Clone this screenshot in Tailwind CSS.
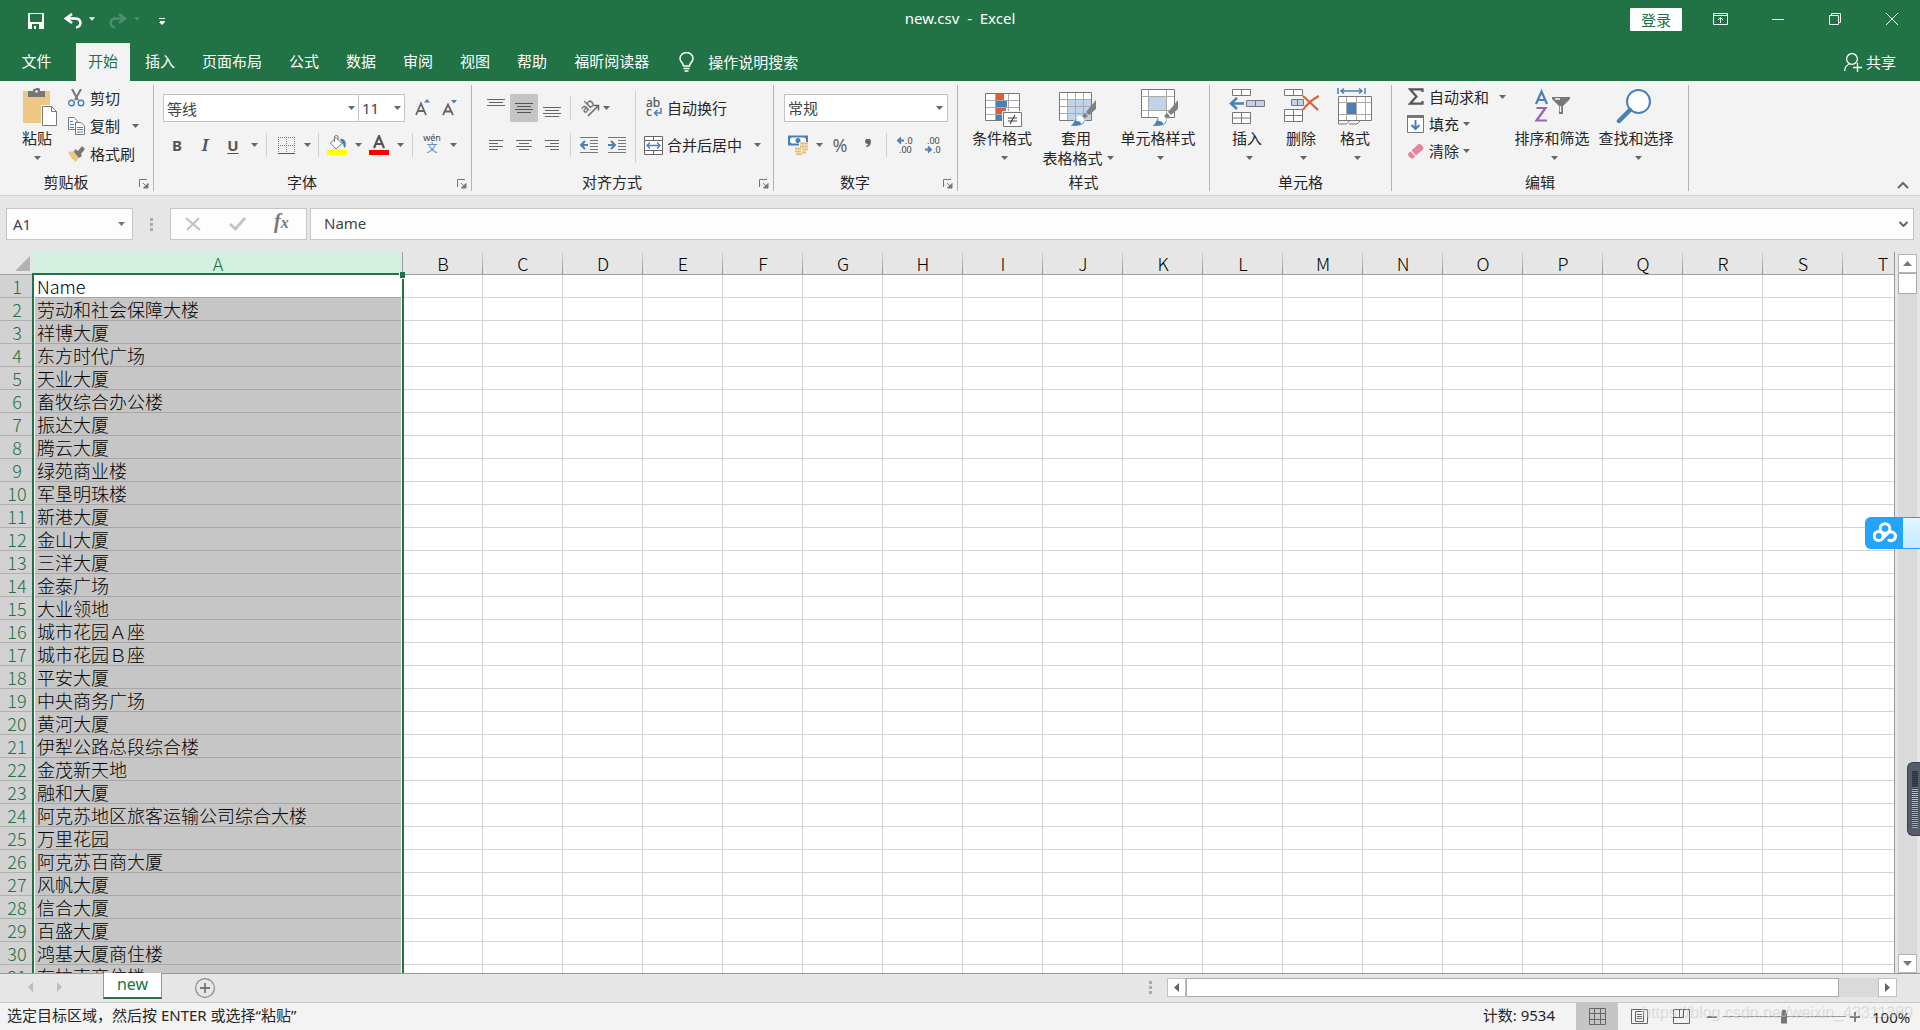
<!DOCTYPE html>
<html lang="zh-CN">
<head>
<meta charset="utf-8">
<title>new.csv - Excel</title>
<script src="https://cdn.jsdelivr.net/npm/@tailwindcss/browser@4"></script>
</head>
<body class="flex h-screen flex-col overflow-hidden bg-[#e6e6e6] font-['Noto_Sans','Noto_Sans_CJK_SC',sans-serif] text-[15px] leading-5 text-[#262626]">

<svg class="hidden">
  <symbol id="arrow" viewBox="0 0 7 4"><path d="M0 0h7L3.5 4z" fill="currentColor"/></symbol>
  <symbol id="launcher" viewBox="0 0 10 10"><path d="M.5 8V.5H8" fill="none" stroke="#777"/><path d="M4 4l4 4M9 4.500V9H4.500z" fill="#777" stroke="#777"/></symbol>
  <symbol id="brush" viewBox="0 0 28 27"><path d="M27 0v9l-7 6-3-3z" fill="#808080"/><path d="M16 13l3 3-4 3-2-3z" fill="#808080"/><path d="M0 26c5-1 4-6 8-9 3-2 8 0 8 4-1 5-8 6-16 5z" fill="#4a80b8" stroke="#fff" stroke-width=".8"/><path d="M8 17c2-2 7-1 7 3 0 2-2 4-3 4 0-3-3-3-5-3z" fill="#fff"/></symbol>
</svg>

<!-- Title bar -->
<header class="flex-none bg-[#217346] text-white">
  <div class="grid h-[43px] grid-cols-[1fr_auto_1fr] items-start">
    <div class="flex h-[43px] items-center pb-[1px] pl-7">
      <button aria-label="保存"><svg class="h-4 w-4" viewBox="0 0 16 16"><path d="M0 0h16v16H0zM2 1v8h12V1zM4 11v5h2v-3h2v3h3v-5z" fill="#fff" fill-rule="evenodd"/></svg></button>
      <button aria-label="撤消" class="ml-5"><svg class="h-4 w-[18px]" viewBox="0 0 18 16"><path d="M8 1L2 5.500l6 4.500M2 5.500h9c7 0 7 8 1 9" fill="none" stroke="#fff" stroke-width="2.600"/></svg></button>
      <button aria-label="撤消列表" class="ml-[7px] pb-1"><svg class="h-1 w-[6px]"><use href="#arrow"/></svg></button>
      <button aria-label="恢复" class="ml-[14px] text-[#4d8f6b]"><svg class="h-4 w-[18px]" viewBox="0 0 18 16"><path d="M10 1l6 4.500-6 4.500M16 5.500H7c-7 0-7 8-1 9" fill="none" stroke="currentColor" stroke-width="2.600"/></svg></button>
      <button aria-label="恢复列表" class="ml-[7px] pb-1 text-[#4d8f6b]"><svg class="h-1 w-[6px]"><use href="#arrow"/></svg></button>
      <button aria-label="自定义快速访问工具栏" class="ml-[19px]"><svg class="h-[7px] w-[6px]" viewBox="0 0 6 7"><path d="M0 .5h6M1 3.500h5" stroke="#fff"/><path d="M0 4h6L3 7z" fill="#fff"/></svg></button>
    </div>
    <h1 class="pt-2 text-center text-[15px] whitespace-pre">new.csv  -  Excel</h1>
    <div class="flex justify-end">
      <button class="mt-2 mr-[10px] h-[23px] w-[52px] rounded-[1px] bg-white leading-[22px] text-[#217346]">登录</button>
      <button aria-label="功能区显示选项" class="flex h-[38px] w-[57px] items-center justify-center"><svg class="h-3 w-[15px]" viewBox="0 0 15 12"><path d="M.5.5h14v11H.5zM.5 2.500h14M7.500 10V5M5 7l2.500-2.500L10 7" fill="none" stroke="#fff"/></svg></button>
      <button aria-label="最小化" class="flex h-[38px] w-[57px] items-center justify-center"><span class="h-px w-3 bg-white"></span></button>
      <button aria-label="还原" class="flex h-[38px] w-[57px] items-center justify-center"><svg class="h-3 w-3" viewBox="0 0 12 12"><path d="M.5 2.500h9v9h-9zM2.500 2.500v-2h9v9h-2" fill="none" stroke="#fff"/></svg></button>
      <button aria-label="关闭" class="flex h-[38px] w-[57px] items-center justify-center"><svg class="h-3 w-3" viewBox="0 0 12 12"><path d="M0 0l12 12M12 0L0 12" stroke="#fff"/></svg></button>
    </div>
  </div>
  <nav class="flex h-[38px] items-stretch gap-[3px]">
    <button class="w-[73px] pb-[2px]">文件</button>
    <button class="bg-[#f3f3f3] px-3 pb-[2px] text-[#217346]">开始</button>
    <button class="px-3 pb-[2px]">插入</button>
    <button class="px-3 pb-[2px]">页面布局</button>
    <button class="px-3 pb-[2px]">公式</button>
    <button class="px-3 pb-[2px]">数据</button>
    <button class="px-3 pb-[2px]">审阅</button>
    <button class="px-3 pb-[2px]">视图</button>
    <button class="px-3 pb-[2px]">帮助</button>
    <button class="px-3 pb-[2px]">福昕阅读器</button>
    <button class="flex items-center gap-[14px] px-3"><svg class="ml-[3px] h-5 w-[15px]" viewBox="0 0 15 20"><path d="M4.500 14c0-3-3.500-4-3.500-7.500a6.500 6 0 0 1 13 0c0 3.500-3.500 4.500-3.500 7.500zM4.500 16.500h6" fill="none" stroke="#fff" stroke-width="1.500"/><path d="M5.500 19h4" stroke="#fff" stroke-width="1.500"/></svg>操作说明搜索</button>
    <button class="ml-auto flex items-center gap-1 pr-6"><svg class="h-[19px] w-[18px]" viewBox="0 0 18 19"><circle cx="8" cy="6" r="5.400" fill="none" stroke="#fff" stroke-width="1.300"/><path d="M.7 18c0-4 2-6 5-7M13.500 10v9M9 14.500h9" fill="none" stroke="#fff" stroke-width="1.300"/></svg>共享</button>
  </nav>
</header>

<!-- Ribbon -->
<div class="flex flex-none items-start border-b border-[#d2d2d2] bg-[#f3f3f3] pt-1 pb-1 text-[#666]">

  <section class="flex h-[106px] w-[154px] flex-none flex-col border-r border-[#b5b5b5]">
    <div class="flex h-[89px]">
      <button class="ml-[14px] flex w-[46px] flex-col items-center">
        <svg class="mt-[3px] ml-[6px] h-10 w-[34px]" viewBox="0 0 34 40"><path d="M0 3h27v32H0z" fill="#eec882"/><path d="M5 3h5V1h2l1-1h3l1 1v2h5v6H5z" fill="#777"/><circle cx="13.500" cy="3.500" r="1.200" fill="#fff"/><path d="M18 17h12l5 5v17H18z" fill="#f3f3f3"/><path d="M19.500 18.500h9l5 5v14h-14z" fill="#fff" stroke="#777"/><path d="M28.500 18.500v5h5" fill="none" stroke="#777"/></svg>
        <span class="text-[#262626]">粘贴</span>
        <span class="flex h-5 items-center"><svg class="h-1 w-[7px]"><use href="#arrow"/></svg></span>
      </button>
      <div class="-mt-px ml-2 flex flex-col">
        <button class="flex h-7 items-center gap-[5px]"><svg class="h-[18px] w-[17px]" viewBox="0 0 17 18"><path d="M4 0l6 11M13 0L7 11" stroke="#777" stroke-width="2"/><circle cx="3.500" cy="14" r="2.800" fill="none" stroke="#4a80b8" stroke-width="1.400"/><circle cx="13" cy="14" r="2.800" fill="none" stroke="#4a80b8" stroke-width="1.400"/></svg><span class="text-[#262626]">剪切</span></button>
        <button class="flex h-7 items-center gap-[5px]"><svg class="h-[18px] w-[17px]" viewBox="0 0 17 18"><path d="M.5.500H6L9 3.500V12.500H.5z" fill="#fff" stroke="#777"/><path d="M7.500 5.500H13l3.500 3.500v8.500H7.500z" fill="#fff" stroke="#777"/><path d="M2 4.500h3M2 7.500h4M2 10.500h4M9 10.500h6M9 12.500h6M9 15h6" stroke="#4a80b8"/></svg><span class="text-[#262626]">复制</span><svg class="ml-[7px] h-1 w-[7px]"><use href="#arrow"/></svg></button>
        <button class="flex h-7 items-center gap-[5px]"><svg class="h-4 w-[17px]" viewBox="0 0 17 16"><path d="M0 6l6-1 5 6-3 5c-3-2-6-5-8-10z" fill="#eec882"/><path d="M7 3l3 2 4-5 3 3-4 5 1 2-3 2-5-6z" fill="#777"/></svg><span class="text-[#262626]">格式刷</span></button>
      </div>
    </div>
    <div class="flex h-[18px] items-center"><span class="flex-1 text-center text-[#262626]">剪贴板</span><button aria-label="剪贴板选项" class="mt-1 w-[21px] pl-[7px]"><svg class="h-[10px] w-[10px]"><use href="#launcher"/></svg></button></div>
  </section>

  <section class="flex h-[106px] w-[318px] flex-none flex-col border-r border-[#b5b5b5]">
    <div class="h-[89px] pt-[9px] pl-[9px]">
      <div class="flex h-7 items-center">
        <div class="relative flex items-center"><input aria-label="字体名称" value="等线" class="h-7 w-[196px] border border-[#c3c3c3] bg-white px-[3px] text-[#444]"><svg class="absolute right-1 h-1 w-[7px]"><use href="#arrow"/></svg></div>
        <div class="relative -ml-px flex items-center"><input aria-label="字号" value="11" class="h-7 w-[47px] border border-[#c3c3c3] bg-white px-[3px] text-[#444]"><svg class="absolute right-1 h-1 w-[7px]"><use href="#arrow"/></svg></div>
        <button aria-label="增大字号" class="ml-[10px]"><svg class="h-[18px] w-[16px]" viewBox="0 0 16 18"><path d="M1 16L6 4.500 11 16M3 12h6" fill="none" stroke="#666" stroke-width="1.800"/><path d="M9 3.500h6L12 0z" fill="#4a80b8"/></svg></button>
        <button aria-label="减小字号" class="ml-[11px]"><svg class="h-[18px] w-[16px]" viewBox="0 0 16 18"><path d="M1 16L6 5.500 11 16M3 12.500h6" fill="none" stroke="#666" stroke-width="1.800"/><path d="M9 1h6l-3 3.500z" fill="#4a80b8"/></svg></button>
      </div>
      <div class="mt-[9px] flex h-7 items-center">
        <button class="w-7 font-bold text-[#555]">B</button>
        <button class="w-7 font-['Noto_Serif','Liberation_Serif',serif] text-base font-bold text-[#555] italic">I</button>
        <button class="w-7 font-bold text-[#555] underline decoration-1 underline-offset-2">U</button>
        <button aria-label="下划线样式" class="flex w-[14px] justify-center"><svg class="h-1 w-[7px]"><use href="#arrow"/></svg></button>
        <span class="mx-[5px] h-6 w-px bg-[#d0d0d0]"></span>
        <button aria-label="边框" class="flex w-7 justify-center"><svg class="h-[17px] w-[17px]" viewBox="0 0 17 17"><path d="M0 .5h17M0 8.500h17M.5 0v16M8.500 0v16M16.500 0v16" fill="none" stroke="#777" stroke-dasharray="1 1"/><path d="M0 16.500h17" stroke="#555"/></svg></button>
        <button aria-label="边框列表" class="flex w-[14px] justify-center"><svg class="h-1 w-[7px]"><use href="#arrow"/></svg></button>
        <span class="mx-1 h-6 w-px bg-[#d0d0d0]"></span>
        <button aria-label="填充颜色" class="flex w-7 justify-center"><svg class="h-5 w-5" viewBox="0 0 20 20"><path d="M0 15h20v5H0z" fill="#ff0"/><path d="M9 2.500l6 6-6 5.500-5.500-6z" fill="#fff" stroke="#777"/><path d="M7.500 7V2q0-1.500 2-1.500T11 2v3" fill="none" stroke="#777"/><path d="M13 4c5-1 7 4 5 9-2-1-1-4-3-5z" fill="#4a80b8"/></svg></button>
        <button aria-label="填充颜色列表" class="flex w-[14px] justify-center"><svg class="h-1 w-[7px]"><use href="#arrow"/></svg></button>
        <button aria-label="字体颜色" class="flex w-7 justify-center"><svg class="h-5 w-5" viewBox="0 0 20 20"><path d="M0 15h20v5H0z" fill="red"/><path d="M5 13l5-12 5 12M7 9h6" fill="none" stroke="#555" stroke-width="2.200"/></svg></button>
        <button aria-label="字体颜色列表" class="flex w-[14px] justify-center"><svg class="h-1 w-[7px]"><use href="#arrow"/></svg></button>
        <span class="mx-[5px] h-6 w-px bg-[#d0d0d0]"></span>
        <button class="flex w-7 flex-col items-center pb-1 text-[9px] leading-[10px] text-[#444]"><span>wén</span><span class="text-[11px] leading-[10px] text-[#4a80b8]">文</span></button>
        <button aria-label="拼音指南" class="flex w-[14px] justify-center"><svg class="h-1 w-[7px]"><use href="#arrow"/></svg></button>
      </div>
    </div>
    <div class="flex h-[18px] items-center"><span class="flex-1 text-center text-[#262626]">字体</span><button aria-label="字体选项" class="mt-1 w-[21px] pl-[7px]"><svg class="h-[10px] w-[10px]"><use href="#launcher"/></svg></button></div>
  </section>

  <section class="flex h-[106px] w-[302px] flex-none flex-col border-r border-[#b5b5b5]">
    <div class="flex h-[89px] pl-[10px]">
      <div class="pt-[9px]">
        <div class="flex h-7 items-center">
          <button aria-label="顶端对齐" class="flex h-7 w-7 justify-center pt-[5px]"><svg class="h-2 w-[18px]" viewBox="0 0 18 8"><path d="M0 .5h18M2 3.500h14M0 6.500h18" stroke="#666"/></svg></button>
          <button aria-label="垂直居中" class="flex h-7 w-7 items-center justify-center bg-[#c5c5c5]"><svg class="h-[11px] w-[18px]" viewBox="0 0 18 11"><path d="M0 .5h18M2 3.500h14M0 6.500h18M2 9.500h14" stroke="#555"/></svg></button>
          <button aria-label="底端对齐" class="flex h-7 w-7 items-end justify-center pb-1"><svg class="h-[11px] w-[18px]" viewBox="0 0 18 11"><path d="M0 .5h18M2 3.500h14M0 6.500h18M2 9.500h14" stroke="#666"/></svg></button>
          <span class="mx-1 h-6 w-px bg-[#d0d0d0]"></span>
          <button aria-label="方向" class="flex w-10 items-center justify-center gap-1"><svg class="h-[18px] w-[19px] overflow-visible" viewBox="0 0 19 18"><text x="3" y="14" transform="rotate(-45 5 12)" font-size="12" fill="#666" stroke="#666" stroke-width=".3">ab</text><path d="M8 17L18 7M13.500 6.500h5v5" fill="none" stroke="#666" stroke-width="1.500"/></svg><svg class="h-1 w-[7px]"><use href="#arrow"/></svg></button>
        </div>
        <div class="mt-[9px] flex h-7 items-center">
          <button aria-label="左对齐" class="flex w-7 justify-center"><svg class="h-[11px] w-[14px]" viewBox="0 0 14 11"><path d="M0 .5h14M0 3.500h9M0 6.500h14M0 9.500h9" stroke="#666"/></svg></button>
          <button aria-label="居中" class="flex w-7 justify-center"><svg class="h-[11px] w-4" viewBox="0 0 16 11"><path d="M0 .5h16M3 3.500h10M0 6.500h16M3 9.500h10" stroke="#666"/></svg></button>
          <button aria-label="右对齐" class="flex w-7 justify-center"><svg class="h-[11px] w-[14px]" viewBox="0 0 14 11"><path d="M0 .5h14M5 3.500h9M0 6.500h14M5 9.500h9" stroke="#666"/></svg></button>
          <span class="mx-1 h-6 w-px bg-[#d0d0d0]"></span>
          <button aria-label="减少缩进量" class="flex w-7 justify-center"><svg class="h-4 w-[18px]" viewBox="0 0 18 16"><path d="M0 .5h18M10 3.500h8M10 6.500h8M10 9.500h8M10 12.500h8M0 15.500h18" stroke="#777"/><path d="M8 8H2M5 4L1 8l4 4" fill="none" stroke="#4a80b8" stroke-width="2"/></svg></button>
          <button aria-label="增加缩进量" class="flex w-7 justify-center"><svg class="h-4 w-[18px]" viewBox="0 0 18 16"><path d="M0 .5h18M10 3.500h8M10 6.500h8M10 9.500h8M10 12.500h8M0 15.500h18" stroke="#777"/><path d="M0 8h6M3 4l4 4-4 4" fill="none" stroke="#4a80b8" stroke-width="2"/></svg></button>
        </div>
      </div>
      <span class="mx-1 mt-[6px] h-[72px] w-px bg-[#d0d0d0]"></span>
      <div class="flex flex-col gap-[9px] pt-[9px] pl-1">
        <button class="flex h-7 items-center gap-1"><svg class="h-[18px] w-[19px] overflow-visible" viewBox="0 0 19 18"><text x="2" y="8" font-size="12" fill="#555" stroke="#555" stroke-width=".2">ab</text><text x="2" y="17" font-size="12" fill="#555" stroke="#555" stroke-width=".2">c</text><path d="M17 9v5h-6M13.500 11L10.500 14l3 3" fill="none" stroke="#4a80b8" stroke-width="1.500"/></svg><span class="text-[#262626]">自动换行</span></button>
        <button class="flex h-7 items-center gap-1"><svg class="h-[19px] w-[19px]" viewBox="0 0 19 19"><path d="M.5.500h18v18H.5zM.5 4.500h18M.5 14.500h18M9.500 0v4M9.500 15v4" fill="#fff" stroke="#666"/><path d="M3 9.500h13M6 6.500l-3 3 3 3M13 6.500l3 3-3 3" fill="none" stroke="#4a80b8" stroke-width="1.400"/></svg><span class="text-[#262626]">合并后居中</span><svg class="ml-2 h-1 w-[7px]"><use href="#arrow"/></svg></button>
      </div>
    </div>
    <div class="flex h-[18px] items-center"><span class="flex-1 text-center text-[#262626]">对齐方式</span><button aria-label="对齐选项" class="mt-1 w-[21px] pl-[7px]"><svg class="h-[10px] w-[10px]"><use href="#launcher"/></svg></button></div>
  </section>

  <section class="flex h-[106px] w-[184px] flex-none flex-col border-r border-[#b5b5b5]">
    <div class="h-[89px] pt-[9px] pl-[10px]">
      <div class="relative flex items-center"><select aria-label="数字格式" class="h-7 w-[164px] appearance-none border border-[#c3c3c3] bg-white px-[3px] text-[#444]"><option>常规</option></select><svg class="pointer-events-none absolute right-[14px] h-1 w-[7px]"><use href="#arrow"/></svg></div>
      <div class="mt-[9px] flex h-7 items-center">
        <button aria-label="会计数字格式" class="flex w-7 justify-center"><svg class="h-5 w-5" viewBox="0 0 20 20"><path d="M1 1.500h18v8H1z" fill="#fff" stroke="#4a80b8" stroke-width="2"/><path d="M1 1h4L1 5zM19 1h-4l4 4zM1 10V6l4 4z" fill="#4a80b8"/><circle cx="10" cy="5.500" r="2.500" fill="#4a80b8"/><path d="M11 7h9v12h-6v1H6v-8h5z" fill="#f3f3f3"/><path d="M12 8.500h8M12 11.500h8M14 14.500h6M14 17.500h4M7 13.500h6M7 16.500h6M8 19.200h6" stroke="#e8bd76" stroke-width="1.800"/></svg></button>
        <button aria-label="会计数字格式列表" class="flex w-[14px] justify-center"><svg class="h-1 w-[7px]"><use href="#arrow"/></svg></button>
        <button class="w-7 text-lg">%</button>
        <button aria-label="千位分隔样式" class="flex w-7 justify-center pb-1"><svg class="h-2 w-[6px]" viewBox="0 0 6 8"><path d="M0 2.500a2.700 2.500 0 0 1 6 0C6 6 4 8 1 8V7c1 0 2-1 2-2-2 0-3-1-3-2.500z" fill="#666"/></svg></button>
        <span class="mx-1 h-6 w-px bg-[#d0d0d0]"></span>
        <button aria-label="增加小数位数" class="flex w-7 justify-center"><svg class="h-[18px] w-4 overflow-visible" viewBox="0 0 16 18"><text x="8" y="8" font-size="9" fill="#444">.0</text><text x="2" y="17" font-size="9" fill="#444">.00</text><path d="M7 4.500H1M4 1.500l-3 3 3 3" fill="none" stroke="#4a80b8" stroke-width="1.800"/></svg></button>
        <button aria-label="减少小数位数" class="flex w-7 justify-center"><svg class="h-[18px] w-4 overflow-visible" viewBox="0 0 16 18"><text x="2" y="8" font-size="9" fill="#444">.00</text><text x="8" y="17" font-size="9" fill="#444">.0</text><path d="M0 13.500h6M3 10.500l3 3-3 3" fill="none" stroke="#4a80b8" stroke-width="1.800"/></svg></button>
      </div>
    </div>
    <div class="flex h-[18px] items-center"><span class="flex-1 text-center text-[#262626]">数字</span><button aria-label="数字选项" class="mt-1 w-[21px] pl-[7px]"><svg class="h-[10px] w-[10px]"><use href="#launcher"/></svg></button></div>
  </section>

  <section class="flex h-[106px] w-[252px] flex-none flex-col border-r border-[#b5b5b5]">
    <div class="flex h-[89px] pl-[10px]">
      <button class="flex w-[68px] flex-col items-center">
        <svg class="mt-[3px] ml-1 h-10 w-[38px]" viewBox="0 0 38 40"><path d="M.5 5.500h34v27H.5z" fill="#fff"/><path d="M11 5h8v7h-8zM11 19h10v7H11z" fill="#d9603f"/><path d="M11 12h11v7H11zM11 26h6v7h-6z" fill="#4a80b8"/><path d="M.5 12.500h34M.5 19.500h34M.5 26.500h34M10.500 5v28M23.500 5v28" stroke="#aaa"/><path d="M.5 5.500h34v27H.5z" fill="none" stroke="#777"/><path d="M17 23h22v17H17z" fill="#f3f3f3"/><path d="M18.500 24.500h18v14h-18z" fill="#fff" stroke="#777"/><path d="M23 30h9M23 33h9M30 27l-5 9" stroke="#444" stroke-width="1.200"/></svg>
        <span class="whitespace-nowrap text-[#262626]">条件格式</span>
        <span class="ml-1 flex h-5 items-center"><svg class="h-1 w-[7px]"><use href="#arrow"/></svg></span>
      </button>
      <button class="flex w-[80px] flex-col items-center">
        <svg class="mt-[3px] ml-1 h-10 w-[38px]" viewBox="0 0 38 40"><path d="M.5 4.500h32v28H.5z" fill="#fff"/><path d="M9 12h24v20H9z" fill="#c0d3e8"/><path d="M.5 11.500h32M.5 18.500h32M.5 25.500h32M8.500 4v28M16.500 4v28M24.500 4v28" stroke="#aaa"/><path d="M.5 4.500h32v28H.5z" fill="none" stroke="#777"/><use href="#brush" x="10" y="12" width="28" height="27"/></svg>
        <span class="text-[#262626]">套用</span>
        <span class="ml-1 flex items-center gap-1 whitespace-nowrap"><span class="text-[#262626]">表格格式</span><svg class="h-1 w-[7px]"><use href="#arrow"/></svg></span>
      </button>
      <button class="flex w-[84px] flex-col items-center">
        <svg class="mt-[3px] ml-1 h-10 w-[38px]" viewBox="0 0 38 40"><path d="M.5 1.500h33v28H.5z" fill="#fff"/><path d="M8 9h18v13H8z" fill="#c0d3e8"/><path d="M.5 8.500h33M.5 22.500h33M7.500 1v28M25.500 1v28" stroke="#aaa"/><path d="M.5 1.500h33v28H.5z" fill="none" stroke="#777"/><use href="#brush" x="10" y="12" width="28" height="27"/></svg>
        <span class="whitespace-nowrap text-[#262626]">单元格样式</span>
        <span class="ml-1 flex h-5 items-center"><svg class="h-1 w-[7px]"><use href="#arrow"/></svg></span>
      </button>
    </div>
    <div class="h-[18px] text-center leading-[18px] text-[#262626]">样式</div>
  </section>

  <section class="flex h-[106px] w-[182px] flex-none flex-col border-r border-[#b5b5b5]">
    <div class="flex h-[89px] pl-[10px]">
      <button class="flex w-[54px] flex-col items-center">
        <svg class="mt-[3px] h-10 w-9" viewBox="0 0 36 40"><path d="M3.500 1.500h18v6h-18zM12.500 1.500v6M3.500 24.500h18v11h-18zM12.500 24.500v11M3.500 30h18" fill="#fff" stroke="#777"/><path d="M17.500 12.500h18v6h-18zM26.500 12.500v6" fill="#c0d3e8" stroke="#777"/><path d="M15 15.500H3M8 10l-6 5.500L8 21" fill="none" stroke="#4a80b8" stroke-width="2.500"/></svg>
        <span class="text-[#262626]">插入</span>
        <span class="ml-1 flex h-5 items-center"><svg class="h-1 w-[7px]"><use href="#arrow"/></svg></span>
      </button>
      <button class="flex w-[54px] flex-col items-center">
        <svg class="mt-[3px] h-10 w-9" viewBox="0 0 36 40"><path d="M1.500 1.500h18v6h-18zM10.500 1.500v6M1.500 21.500h18v12h-18zM10.500 21.500v12M1.500 27.500h18" fill="#fff" stroke="#777"/><path d="M8.500 11.500h12v6h-12zM14.500 11.500v6" fill="#c0d3e8" stroke="#777"/><path d="M20 8l15 14M36 8C30 11 24 16 20 22" fill="none" stroke="#d9603f" stroke-width="2.200"/></svg>
        <span class="text-[#262626]">删除</span>
        <span class="ml-1 flex h-5 items-center"><svg class="h-1 w-[7px]"><use href="#arrow"/></svg></span>
      </button>
      <button class="flex w-[54px] flex-col items-center">
        <svg class="mt-[3px] h-10 w-9" viewBox="0 0 36 40"><path d="M1 0v6M28 0v6M4 3h21M7 .5L4 3l3 2.500M22 .5L25 3l-3 2.500" fill="none" stroke="#4a80b8" stroke-width="1.500"/><path d="M1.500 8.500h33v24h-33z" fill="#fff"/><path d="M1.500 14.500h33M1.500 26.500h33M9.500 8v24M19.500 8v24M28.500 8v24" stroke="#aaa"/><path d="M10 15h9v11h-9z" fill="#4a80b8"/><path d="M1.500 8.500h33v24h-33zM1.500 32v4h8l3-3M12 36h8l3-3" fill="none" stroke="#777"/></svg>
        <span class="text-[#262626]">格式</span>
        <span class="ml-1 flex h-5 items-center"><svg class="h-1 w-[7px]"><use href="#arrow"/></svg></span>
      </button>
    </div>
    <div class="h-[18px] text-center leading-[18px] text-[#262626]">单元格</div>
  </section>

  <section class="flex h-[106px] w-[297px] flex-none flex-col border-r border-[#b5b5b5]">
    <div class="flex h-[89px] pl-[15px]">
      <div class="-mt-[2px] flex w-[103px] flex-col">
        <button class="flex h-[27px] items-center gap-1"><svg class="h-[17px] w-[18px]" viewBox="0 0 18 17"><path d="M15.500 4V1.300H3L9.500 8.500 3 15.700h12.500V13" fill="none" stroke="#555" stroke-width="2.200"/></svg><span class="text-[#262626]">自动求和</span><svg class="ml-[6px] h-1 w-[7px]"><use href="#arrow"/></svg></button>
        <button class="flex h-[27px] items-center gap-1"><svg class="h-[18px] w-[18px]" viewBox="0 0 18 18"><path d="M.5.500h16v17H.5z" fill="#fff" stroke="#777"/><path d="M0 0h17v3H0z" fill="#777"/><path d="M8.500 5v9M4.500 10l4 4 4-4" fill="none" stroke="#4a80b8" stroke-width="2"/></svg><span class="text-[#262626]">填充</span><svg class="h-1 w-[7px]"><use href="#arrow"/></svg></button>
        <button class="flex h-[27px] items-center gap-1"><svg class="h-[18px] w-[18px]" viewBox="0 0 18 18"><path d="M11 2.500q1.500-1.500 3 0l2 2q1 1.500 0 3L9 13.500 4.500 8.500z" fill="#e8839b"/><path d="M3.500 9.500l4.500 5-1.500 1.500q-1.500 1-3 0L1.500 14q-1-1.500 0-3z" fill="#e8839b"/></svg><span class="text-[#262626]">清除</span><svg class="h-1 w-[7px]"><use href="#arrow"/></svg></button>
      </div>
      <button class="flex w-[84px] flex-col items-center">
        <svg class="mt-[3px] h-10 w-9" viewBox="0 0 36 40"><path d="M2 16L7.500 3.500 13 16M4 12h7" fill="none" stroke="#4a80b8" stroke-width="2.200"/><path d="M2.500 20h9L2.500 32.500H13" fill="none" stroke="#9a63b5" stroke-width="2.200"/><path d="M18 9h18v2l-7 7v8h-4v-8l-7-7z" fill="#777"/><path d="M21 11h5M26.500 18v6" stroke="#f3f3f3" stroke-width="1.500"/></svg>
        <span class="whitespace-nowrap text-[#262626]">排序和筛选</span>
        <span class="ml-1 flex h-5 items-center"><svg class="h-1 w-[7px]"><use href="#arrow"/></svg></span>
      </button>
      <button class="flex w-[84px] flex-col items-center">
        <svg class="mt-[3px] mr-1 h-10 w-9" viewBox="0 0 36 40"><circle cx="22.500" cy="13.500" r="11.500" fill="#fff" stroke="#4a80b8" stroke-width="2"/><path d="M14 22L3 33" stroke="#4a80b8" stroke-width="4.500" stroke-linecap="round"/></svg>
        <span class="whitespace-nowrap text-[#262626]">查找和选择</span>
        <span class="ml-1 flex h-5 items-center"><svg class="h-1 w-[7px]"><use href="#arrow"/></svg></span>
      </button>
    </div>
    <div class="h-[18px] text-center leading-[18px] text-[#262626]">编辑</div>
  </section>

  <button aria-label="折叠功能区" class="mr-[11px] mb-[2px] ml-auto self-end"><svg class="h-2 w-3" viewBox="0 0 12 8"><path d="M1 7l5-5 5 5" fill="none" stroke="#666" stroke-width="2"/></svg></button>
</div>

<!-- Formula bar -->
<div class="flex flex-none items-center pt-3 pr-[6px] pb-3 pl-[6px] text-[#444]">
  <div class="relative flex items-center"><input aria-label="名称框" value="A1" class="h-8 w-[127px] border border-[#c6c6c6] bg-[#fdfdfd] px-[6px]"><svg class="absolute right-2 h-1 w-[7px] text-[#777]"><use href="#arrow"/></svg></div>
  <span class="mx-[17px] flex flex-col gap-[2px]"><i class="h-[3px] w-[3px] bg-[#aaa]"></i><i class="h-[3px] w-[3px] bg-[#aaa]"></i><i class="h-[3px] w-[3px] bg-[#aaa]"></i></span>
  <div class="flex h-8 w-[137px] items-center gap-7 border border-[#c6c6c6] bg-[#fdfdfd] pl-[14px]">
    <button aria-label="取消"><svg class="h-[14px] w-4" viewBox="0 0 16 14"><path d="M1 1l14 12M14 1L2 13" stroke="#c2c2c2" stroke-width="2.200"/></svg></button>
    <button aria-label="输入"><svg class="h-[14px] w-[17px]" viewBox="0 0 17 14"><path d="M1 7l5.500 5L16 1" fill="none" stroke="#c2c2c2" stroke-width="2.800"/></svg></button>
    <button aria-label="插入函数" class="pb-1 font-['Liberation_Serif',serif] text-xl leading-6 font-bold text-[#777] italic">f<span class="text-base">x</span></button>
  </div>
  <div class="relative ml-[3px] flex flex-1 items-center"><input aria-label="编辑栏" value="Name" class="h-8 w-full border border-[#c6c6c6] bg-[#fdfdfd] px-[13px] pb-[2px]"><svg class="absolute right-[6px] h-[6px] w-[9px]" viewBox="0 0 9 6"><path d="M.5 1l4 4 4-4" fill="none" stroke="#666" stroke-width="2"/></svg></div>
</div>

<!-- Worksheet -->
<main class="flex min-h-0 flex-1">
  <div class="relative flex-1 overflow-hidden border-r border-[#999]">
    <table class="w-[1923px] table-fixed border-separate border-spacing-0 font-['Noto_Sans_CJK_SC',sans-serif] text-lg leading-[22px] font-light text-black">
      <thead>
        <tr id="columns" class="h-[23px]">
          <th class="w-[34px] border-b border-[#a0a0a0] bg-[#e6e6e6] p-0"><svg aria-label="全选" class="ml-[15px] h-[15px] w-[15px]" viewBox="0 0 15 15"><path d="M15 0v15H0z" fill="#b2b2b2"/></svg></th>
          <th class="w-[369px] border-r border-b border-[#a0a0a0] bg-[#d3f0e0] p-0 text-center font-light text-[#217346]">A</th>
        </tr>
      </thead>
      <tbody id="rows"></tbody>
    </table>
    <!-- selection frame -->
    <div class="pointer-events-none absolute top-[21px] -bottom-1 left-8 w-[372px] border-2 border-[#217346] shadow-[inset_0_0_0_1px_#fff]"></div>
    <div class="absolute top-[20px] left-[399px] h-[7px] w-[6px] border-b border-l border-white bg-[#217346]"></div>
  </div>
  <div class="mt-[2px] mr-[3px] ml-[3px] flex w-[19px] flex-col bg-[#dadada]">
    <button aria-label="向上滚动" class="flex h-[19px] items-center justify-center border border-[#b5b5b5] bg-white text-[#777]"><svg class="h-[5px] w-[9px]" viewBox="0 0 9 5"><path d="M0 5h9L4.500 0z" fill="currentColor"/></svg></button>
    <div class="h-[21px] border border-[#ababab] bg-white"></div>
    <button aria-label="向下滚动" class="mt-auto flex h-[19px] items-center justify-center border border-[#b5b5b5] bg-white text-[#777]"><svg class="h-[5px] w-[9px]" viewBox="0 0 9 5"><path d="M0 0h9L4.500 5z" fill="currentColor"/></svg></button>
  </div>
</main>

<!-- Sheet tabs -->
<div class="flex h-[30px] flex-none items-start border-b border-[#c6c6c6] shadow-[inset_0_1px_0_#999]">
  <button aria-label="上一张工作表" class="mt-[9px] ml-7"><svg class="h-[10px] w-[5px]" viewBox="0 0 5 10"><path d="M5 0v10L0 5z" fill="#bbb"/></svg></button>
  <button aria-label="下一张工作表" class="mt-[9px] ml-6"><svg class="h-[10px] w-[5px]" viewBox="0 0 5 10"><path d="M0 0v10l5-5z" fill="#bbb"/></svg></button>
  <button class="ml-[41px] flex h-[26px] w-[59px] items-center justify-center border-x border-b-2 border-x-[#999] border-b-[#217346] bg-white pb-[2px] text-base text-[#217346]">new</button>
  <button aria-label="新工作表" class="mt-[5px] ml-[33px]"><svg class="h-5 w-5" viewBox="0 0 20 20"><circle cx="10" cy="10" r="9.400" fill="none" stroke="#888" stroke-width="1.200"/><path d="M10 5v10M5 10h10" stroke="#777" stroke-width="1.800"/></svg></button>
  <span class="mt-2 ml-auto flex flex-col gap-[2px]"><i class="h-[3px] w-[3px] bg-[#aaa]"></i><i class="h-[3px] w-[3px] bg-[#aaa]"></i><i class="h-[3px] w-[3px] bg-[#aaa]"></i></span>
  <div class="mt-[5px] mr-[23px] ml-[15px] flex h-[19px] w-[38%] bg-[#dadada]">
    <button aria-label="向左滚动" class="flex w-[19px] items-center justify-center border border-[#c0c0c0] bg-white"><svg class="h-[9px] w-[5px]" viewBox="0 0 5 9"><path d="M5 0v9L0 4.500z" fill="#666"/></svg></button>
    <div class="flex-1 border border-[#ababab] bg-white"></div>
    <button aria-label="向右滚动" class="ml-[39px] flex w-[19px] items-center justify-center border border-[#c0c0c0] bg-white"><svg class="h-[9px] w-[5px]" viewBox="0 0 5 9"><path d="M0 0v9l5-4.500z" fill="#666"/></svg></button>
  </div>
</div>

<!-- Status bar -->
<footer class="relative flex h-[27px] flex-none items-stretch bg-[#f3f3f3] leading-6">
  <span class="pl-[7px]">选定目标区域，然后按 ENTER 或选择“粘贴”</span>
  <span class="mr-[21px] ml-auto">计数: 9534</span>
  <button aria-label="普通" class="flex w-[42px] items-center justify-center bg-[#c5c5c5]"><svg class="h-[17px] w-[17px]" viewBox="0 0 17 17"><path d="M.5.500h16v16H.5zM.5 5.500h16M.5 11.500h16M5.500 0v16M11.500 0v16" fill="none" stroke="#666"/></svg></button>
  <button aria-label="页面布局" class="flex w-[42px] items-center justify-center"><svg class="h-[15px] w-[17px]" viewBox="0 0 17 15"><path d="M.5.500h16v14H.5zM4.500 2.500h8v10h-8zM6 5.500h5M6 7.500h5M6 9.500h5" fill="none" stroke="#666"/></svg></button>
  <button aria-label="分页预览" class="flex w-[42px] items-center justify-center"><svg class="h-[15px] w-[17px]" viewBox="0 0 17 15"><path d="M.5.500h16v14H.5zM.5 8.500h10v-8M6.500 0v8" fill="none" stroke="#666"/></svg></button>
  <button aria-label="缩小" class="ml-[5px] flex w-[10px] items-center"><span class="h-[2px] w-[10px] bg-[#888]"></span></button>
  <div class="relative ml-[6px] flex w-[123px] items-center">
    <span class="h-px w-full bg-[#999]"></span>
    <input type="range" aria-label="显示比例" class="absolute inset-0 w-full opacity-0">
    <span class="pointer-events-none absolute left-[58px] h-[14px] w-[6px] bg-[#777] [clip-path:polygon(20%_0,80%_0,100%_30%,100%_100%,0_100%,0_30%)]"></span>
  </div>
  <button aria-label="放大" class="ml-1 flex items-center"><svg class="h-[10px] w-[10px]" viewBox="0 0 10 10"><path d="M0 5h10M5 0v10" stroke="#666" stroke-width="1.600"/></svg></button>
  <span class="mr-2 ml-3 w-10 pt-[2px]">100%</span>
  <span class="pointer-events-none absolute right-2 bottom-2 font-['Liberation_Sans',sans-serif] text-base leading-5 text-white/40 [text-shadow:1px_1px_1px_rgb(0_0_0/0.150)]">https://blog.csdn.net/weixin_43311389</span>
</footer>

<!-- Floating desktop widgets -->
<div class="absolute top-[517px] right-0 flex h-8 w-[55px] overflow-hidden rounded-l-md border-y border-l border-[#2a9df4] bg-[#23a4ff]">
  <svg class="mt-[4px] ml-[7px] h-[22px] w-6" viewBox="0 0 24 22"><g fill="none" stroke="#fff" stroke-width="3"><circle cx="12" cy="6.500" r="4.800"/><circle cx="5.700" cy="14" r="4.500"/><path d="M9 17l6-6c3-3 7.500 0 7.500 3a4.500 4.500 0 0 1-7.500 3.500"/></g></svg>
  <span class="ml-auto w-[17px] bg-linear-to-b from-[#e2f5ff] to-[#c4ebff]"></span>
</div>
<div class="absolute top-[762px] right-0 h-[74px] w-[13px] rounded-l-md border border-r-0 border-[#3c404c] bg-[#565b6b] pt-2 pl-1">
  <div class="h-[57px] w-[6px] bg-[repeating-linear-gradient(to_bottom,transparent_0_1px,#3c4250_1px_2px),linear-gradient(to_bottom,#333_0_28%,#e0b050_30%,#d8d850_45%,#80d080_70%,#40d8c8)]"></div>
</div>

<script>
  const names = ["Name", "劳动和社会保障大楼", "祥博大厦", "东方时代广场", "天业大厦", "畜牧综合办公楼", "振达大厦", "腾云大厦", "绿苑商业楼", "军垦明珠楼", "新港大厦", "金山大厦", "三洋大厦", "金泰广场", "大业领地", "城市花园Ａ座", "城市花园Ｂ座", "平安大厦", "中央商务广场", "黄河大厦", "伊犁公路总段综合楼", "金茂新天地", "融和大厦", "阿克苏地区旅客运输公司综合大楼", "万里花园", "阿克苏百商大厦", "风帆大厦", "信合大厦", "百盛大厦", "鸿基大厦商住楼", "布拉克商住楼"];
  const letters = [..."BCDEFGHIJKLMNOPQRST"];
  document.getElementById("columns").insertAdjacentHTML("beforeend", letters.map(l =>
    `<th class="w-[80px] border-b border-[#a0a0a0] bg-[#e6e6e6] bg-[linear-gradient(to_bottom,#d4d4d4,#909090)] bg-[length:1px_100%] bg-right bg-no-repeat p-0 text-center font-light">${l}</th>`).join(""));
  const blanks = letters.map(() => `<td class="border-r border-b border-[#d4d4d4] bg-white p-0"></td>`).join("");
  document.getElementById("rows").innerHTML = names.map((n, i) =>
    `<tr class="h-[23px]"><th class="border-b border-[#b0b0b0] bg-[#d2d2d2] p-0 text-center font-light text-[#217346]">${i + 1}</th>` +
    `<td class="border-r border-b border-[#a6a6a6] p-0 pl-[3px] whitespace-nowrap ${i ? "bg-[#c6c6c6]" : "bg-white"}">${n}</td>${blanks}</tr>`).join("");
</script>
</body>
</html>
